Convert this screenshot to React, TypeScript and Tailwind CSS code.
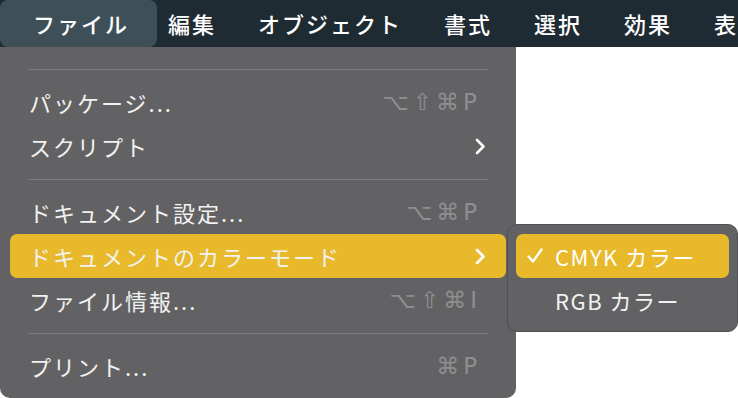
const jp = { fontFamily: '"Noto Sans CJK JP", "Noto Sans", sans-serif' };

function Chevron() {
  return (
    <svg width="11" height="17" viewBox="0 0 11 17" fill="none">
      <path d="M2 2 L8.5 8.5 L2 15" stroke="white" strokeWidth="2.6" strokeLinecap="round" strokeLinejoin="round" />
    </svg>
  );
}

function Check() {
  return (
    <svg width="16" height="16" viewBox="0 0 16 16" fill="none">
      <path d="M1.5 8.5 L6 13.5 L14.5 1.5" stroke="white" strokeWidth="2.4" strokeLinecap="round" strokeLinejoin="round" />
    </svg>
  );
}

function Separator() {
  return (
    <div className="h-[22px] flex items-center px-[28px]">
      <div className="h-px w-full bg-[#7a7a7c]" />
    </div>
  );
}

interface RowProps {
  label: string;
  shortcut?: string;
  submenu?: boolean;
  active?: boolean;
}

function Row({ label, shortcut, submenu, active }: RowProps) {
  return (
    <div
      className={`mx-[10px] h-[44px] flex items-center justify-between pl-[19px] pr-[20px] rounded-[7px] ${
        active ? 'bg-[#e8b92b]' : ''
      }`}
    >
      <span className="text-[22px] tracking-[2px] text-[#f2f2f2]">{label}</span>
      {shortcut && (
        <span
          className="mr-[5px] text-[23px] tracking-[4px] text-[#8e8e90]"
          style={{ fontFamily: '"DejaVu Sans", sans-serif' }}
        >
          {shortcut}
        </span>
      )}
      {submenu && <Chevron />}
    </div>
  );
}

export default function App() {
  const bar = ['編集', 'オブジェクト', '書式', '選択', '効果', '表'];

  return (
    <div className="w-[738px] h-[398px] bg-white overflow-hidden" style={jp}>
      <div className="h-[47px] bg-[#1e2b32] flex items-center text-white text-[22px] font-medium whitespace-nowrap overflow-hidden">
        <div className="h-[47px] w-[157px] shrink-0 rounded-[8px] bg-[#3e4f57] flex items-center pl-[33px] tracking-[2px]">
          ファイル
        </div>
        <div className="flex shrink-0 items-center gap-[42px] ml-[11px] tracking-[2px]">
          {bar.map((b) => (
            <span key={b} className="shrink-0">{b}</span>
          ))}
        </div>
      </div>

      <div className="relative w-[516px] h-[351px] bg-[#626264] rounded-b-[10px] pt-[11px]">
        <Separator />
        <Row label="パッケージ..." shortcut="⌥⇧⌘P" />
        <Row label="スクリプト" submenu />
        <Separator />
        <Row label="ドキュメント設定..." shortcut="⌥⌘P" />
        <Row label="ドキュメントのカラーモード" submenu active />
        <Row label="ファイル情報..." shortcut="⌥⇧⌘I" />
        <Separator />
        <Row label="プリント..." shortcut="⌘P" />

        <div className="absolute left-[507px] top-[177px] w-[231px] h-[108px] rounded-[10px] bg-[#626264] border border-[#505052] py-[9px] px-[8px]">
          <div className="h-[44px] rounded-[7px] bg-[#e8b92b] flex items-center pl-[11px] text-white">
            <span className="w-[28px] flex items-center"><Check /></span>
            <span className="text-[22px] tracking-[1.5px]">CMYK カラー</span>
          </div>
          <div className="h-[44px] flex items-center pl-[39px] text-[22px] text-[#f2f2f2] tracking-[1.5px]">
            RGB カラー
          </div>
        </div>
      </div>
    </div>
  );
}
